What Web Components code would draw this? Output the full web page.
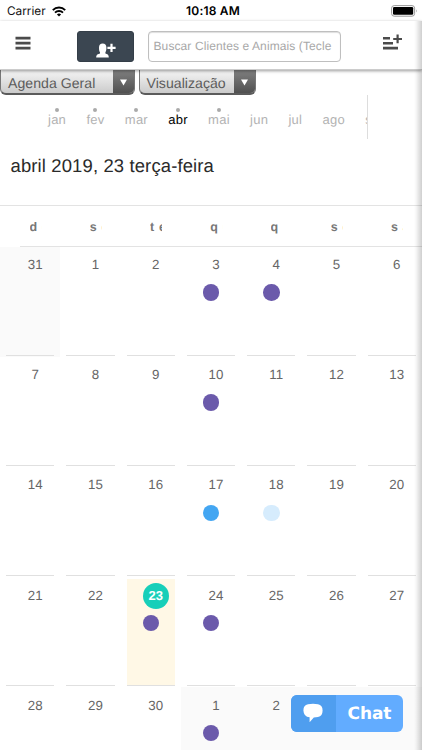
<!DOCTYPE html>
<html lang="pt-BR"><head><meta charset="utf-8"><title>Agenda</title>
<style>html,body{margin:0;background:#fff}body{width:422px;height:750px;overflow:hidden;font-family:"Liberation Sans",Arial,sans-serif;text-rendering:geometricPrecision}</style></head>
<body><agenda-app></agenda-app>
<script>
const define=(name,html)=>customElements.define(name,class extends HTMLElement{
  connectedCallback(){
    if(this.shadowRoot)return;
    const t=document.createElement('template');
    t.innerHTML='<style>*{box-sizing:border-box}</style>'+(typeof html==='function'?html(this):html);
    this.attachShadow({mode:'open'}).append(t.content.cloneNode(true));
  }
});

define('status-bar',`<style>
:host{display:grid;grid-template-columns:1fr auto 1fr;align-items:center;height:21px;padding:1px 4px 0 7px;font:11.8px/20px Inter,sans-serif;color:#111}
.l{display:flex;align-items:center;gap:6px}.c{font-weight:600;font-size:12px;color:#000;letter-spacing:.2px;padding-left:1px}.r{display:flex;justify-content:flex-end}
svg{display:block}</style>
<div class="l"><span>Carrier</span><svg width="14" height="11" viewBox="0 0 14 11"><g fill="none" stroke="#000" stroke-width="1.9"><path d="M.8 4.1a8.8 8.8 0 0 1 12.4 0"/><path d="M3 6.6a5.7 5.7 0 0 1 8 0"/></g><path d="M7 10.6 4.9 8.5a3 3 0 0 1 4.2 0z"/></svg></div>
<div class="c">10:18 AM</div>
<div class="r"><svg width="27" height="12" viewBox="0 0 27 12"><rect x=".6" y=".6" width="23" height="10.6" rx="2.6" fill="#fff" stroke="#999"/><rect x="2" y="2" width="20.2" height="7.8" rx="1.3"/><path d="M25 4.2q1.500 1.700 0 3.400z" fill="#999"/></svg></div>`);

define('tool-bar',`<style>
:host{display:flex;align-items:flex-start;height:49px;padding:10px 20px 0 15px;background:#fff;border-bottom:1px solid #ccc;box-shadow:0 1px 3px #0006;position:relative;z-index:1}
svg{display:block}.menu{padding-top:3.500px;width:61.500px}
.add{width:57px;height:31px;border-radius:3px;background:#3b4651;border:1px solid #343e48;padding:8.500px 0 0 18px}
.search{width:193.500px;height:31px;margin-left:14px;border:1px solid #bfbfbf;border-radius:4px;box-shadow:inset 0 1px 1px #0002;overflow:hidden;white-space:nowrap;color:#a8a8a8;font-size:12px;line-height:29px;padding-left:5px;letter-spacing:.1px}
.list{margin-left:auto;padding-top:2.300px}</style>
<div class="menu"><svg width="16" height="15" viewBox="0 0 16 15"><path d="M.5 3.200h15M.5 8.200h15M.5 13.200h15" stroke="#4b4b4b" stroke-width="2.800"/></svg></div>
<div class="add"><svg width="20" height="19" viewBox="0 0 20 19" fill="#fff"><path d="M3 6.400C3 3.900 4.400 2.400 6.700 2.400s3.700 1.500 3.700 4c0 2.700-.4 3.900-1 4.900v1.300c1.800.6 3.400 1 3.400 3.900H.2c0-2.900 1.900-3.300 3.800-3.900v-1.300C3.300 10.300 3 9.100 3 6.400z"/><path d="M11.400 5.700h3V2.700h2.200v3h3v2.200h-3v3h-2.200v-3h-3z"/></svg></div>
<div class="search">Buscar Clientes e Animais (Tecle</div>
<div class="list"><svg width="19" height="17" viewBox="0 0 19 17" fill="#4b4b4b"><path d="M0 3.900h7v2.600H0zM0 8.900h10v2.500H0zM0 13.700h15v2.700H0zM10.200 5h3.300V1.600h2.200V5H19v2h-3.300v3.300h-2.200V7h-3.300z"/></svg></div>`);

define('drop-down',`<style>
:host{display:flex;height:31px;border:1px solid #777;border-bottom:2px solid #5b5b5b;border-radius:6px;overflow:hidden;background:linear-gradient(#f4f4f4 20%,#cbcbcb);color:#5c5c5c;font-size:14.100px;line-height:36px}
.t{flex:1;padding-left:7px;white-space:nowrap;letter-spacing:.03px}.a{width:21px;background:linear-gradient(#8b8b8b,#505050)}svg{display:block;margin:13.500px 0 0 5.500px}</style>
<div class="t"><slot></slot></div><div class="a"><svg width="9" height="8"><path d="M1 .4h7L4.500 6.600z" fill="#fff"/></svg></div>`);

define('month-strip',`<style>
:host{display:flex;gap:20.300px;width:368px;height:44px;padding-left:48px;border-right:1px solid #ddd;overflow:hidden;font-size:13px;letter-spacing:.25px;color:#b3b3b3}
div{display:flex;flex-direction:column;align-items:center;line-height:16px;padding-top:17px;position:relative}
.dot:before{content:"";position:absolute;top:13px;left:calc(50% - 2px);width:4px;height:4px;border-radius:50%;background:#aaa}.on{color:#000}
.cut{width:1.500px;align-items:flex-start;overflow:hidden}</style>
<div class="dot">jan</div><div class="dot">fev</div><div class="dot">mar</div><div class="dot on">abr</div><div class="dot">mai</div><div>jun</div><div>jul</div><div>ago</div><div class="cut">set</div>`);

define('week-header',`<style>
:host{display:grid;grid-template-columns:repeat(7,60.250px);grid-template-rows:40px 1px;height:42px;border-top:1px solid #e3e3e3;font-weight:bold;font-size:12.500px;color:#777}
div{margin-left:29.500px;width:12.300px;height:40px;overflow:hidden;white-space:nowrap;letter-spacing:4.800px;line-height:42px}
i{grid-column:1/-1;height:1px;background:#e3e3e3;margin-left:20px;width:402px;align-self:end}</style>
${['dom','seg','ter','qua','qui','sex','sáb'].map(d=>`<div>${d}</div>`).join('')}<i></i>`);

define('day-cell',e=>`<style>
:host{display:block;height:110.100px;padding:0 6px;font-size:13.300px;color:#666}
:host([off]){background:#fafafa}
.in{height:109px;border-bottom:1px solid #e0e0e0;padding-left:16.200px}
:host([today]) .in{background:linear-gradient(#fff 2px,#fff8e6 2px)}
.n{width:26px;height:26px;line-height:27px;text-align:center;border-radius:50%;position:relative;top:4.300px}
:host([today]) .n{background:#17cfb9;color:#fff;font-weight:bold;line-height:25px;top:5.500px;font-size:13px}
.d{width:16.500px;height:16.500px;border-radius:50%;background:${e.getAttribute('dot')};margin-top:11.400px;margin-left:-.200px}</style>
<div class="in"><div class="n"><slot></slot></div>${e.hasAttribute('dot')?'<div class="d"></div>':''}</div>`);

const days=[31,...Array.from({length:30},(_,i)=>i+1),1,2,3,4];
const dots={3:'#6b5aab',4:'#6b5aab',10:'#6b5aab',17:'#43a6f2',18:'#d6ecfd',23:'#6b5aab',24:'#6b5aab',31:'#6b5aab'};
define('month-grid',`<style>:host{display:grid;grid-template-columns:repeat(7,60.250px)}</style>
${days.map((d,i)=>`<day-cell ${i===0||i>30?'off':''} ${i===23?'today':''} ${dots[i]?`dot="${dots[i]}"`:''}>${d}</day-cell>`).join('')}`);

define('chat-button',`<style>
:host{display:flex;width:112px;height:37px;border-radius:6px;overflow:hidden;background:#62acff;color:#fff;font:bold 17px/39px "DejaVu Sans",sans-serif}
.i{width:44.500px;background:#4f9eef;padding:8.500px 0 0 12px}.t{padding-left:12px;letter-spacing:-.1px}svg{display:block}</style>
<div class="i"><svg width="21" height="21" viewBox="0 0 21 21"><path d="M5 1.300Q10 .3 15 1.300q4.600.7 4.600 6.300t-4.600 6.300q-2 .4-4.200.5L6.600 19.300V14.300q-5.900-.2-6.200-6.700Q.4 2 5 1.300z" fill="#fff"/></svg></div><div class="t">Chat</div>`);

define('agenda-app',`<style>
:host{display:block;position:relative;width:422px;height:750px;overflow:hidden}
.sel{display:flex;gap:3.500px;margin-top:-6px}.sel :first-child{width:135px}.sel :last-child{width:117.500px}
h1{margin:0;height:66px;padding:14px 0 0 10.500px;font-weight:400;font-size:18.450px;line-height:26px;color:#2a2a2a;letter-spacing:.14px}
.edge{position:absolute;right:0;top:21px;bottom:0;width:8px;z-index:3;background:linear-gradient(90deg,#0000,#00000008 25%,#00000030)}
chat-button{position:absolute;left:291px;top:694.500px;z-index:2}</style>
<status-bar></status-bar><tool-bar></tool-bar>
<div class="sel"><drop-down>Agenda Geral</drop-down><drop-down>Visualização</drop-down></div>
<month-strip></month-strip><h1>abril 2019, 23 terça-feira</h1>
<week-header></week-header><month-grid></month-grid>
<div class="edge"></div><chat-button></chat-button>`);
</script></body></html>
